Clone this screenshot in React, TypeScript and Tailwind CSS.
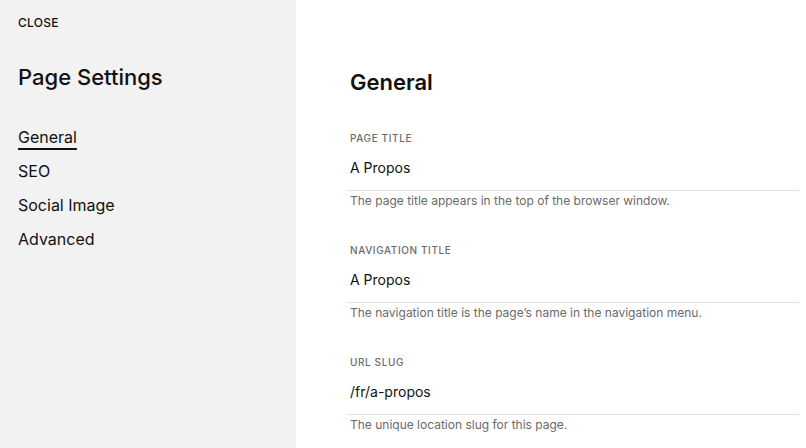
import React from "react";

const font = { fontFamily: "Inter, 'Noto Sans', 'Liberation Sans', sans-serif" };

function Field({ label, value, help, first }: { label: string; value: string; help: string; first?: boolean }) {
  return (
    <div className={first ? "mt-[40px]" : "mt-[38px]"}>
      <div className="pl-[4px] text-[10px] leading-[10px] font-medium tracking-[0.06em] text-[#6b6b6b]">{label}</div>
      <div className="pl-[4px] pt-[18px] pb-[15px] border-b border-[#e3e3e3] text-[14px] leading-[14px] text-[#111]">{value}</div>
      <div className="pl-[4px] pt-[4px] text-[12px] leading-[12px] text-[#6a6a6a]">{help}</div>
    </div>
  );
}

export default function App() {
  return (
    <div className="flex w-[806px] h-[448px] overflow-hidden bg-white" style={font}>
      <aside className="w-[296px] shrink-0 bg-[#f2f2f2] pl-[18px] pt-[17px]">
        <div className="text-[12px] leading-[12px] font-medium text-[#111] tracking-[0.02em]">CLOSE</div>
        <h1 className="mt-[37px] text-[22px] leading-[22px] font-medium text-[#111]">Page Settings</h1>
        <nav className="mt-[32px] flex flex-col text-[16px] leading-[34px] text-[#111]">
          <span className="underline decoration-2 underline-offset-[5px] self-start">General</span>
          <span>SEO</span>
          <span>Social Image</span>
          <span>Advanced</span>
        </nav>
      </aside>
      <main className="flex-1 pl-[50px] pr-[7px] pt-[71px]">
        <h2 className="pl-[4px] text-[22px] leading-[22px] font-semibold text-[#111]">General</h2>
        <Field first label="PAGE TITLE" value="A Propos" help="The page title appears in the top of the browser window." />
        <Field label="NAVIGATION TITLE" value="A Propos" help="The navigation title is the page’s name in the navigation menu." />
        <Field label="URL SLUG" value="/fr/a-propos" help="The unique location slug for this page." />
      </main>
    </div>
  );
}
